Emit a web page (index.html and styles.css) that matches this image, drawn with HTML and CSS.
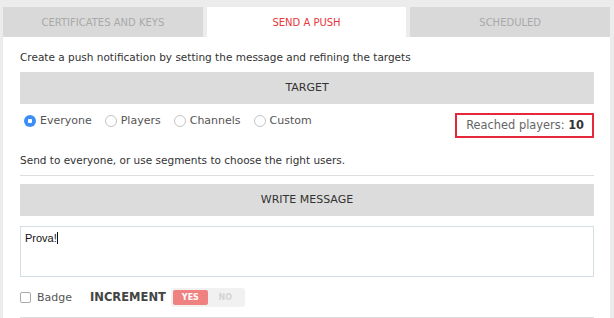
FILE: index.html
```html
<!DOCTYPE html>
<html lang="en">
<head>
    <meta charset="UTF-8">
    <title>Push</title>
    <link rel="stylesheet" href="styles.css">
</head>
<body>
    <div class="tabs">
        <div class="tab">CERTIFICATES AND KEYS</div>
        <div class="tab active">SEND A PUSH</div>
        <div class="tab">SCHEDULED</div>
    </div>

    <div class="panel">
        <p class="intro">Create a push notification by setting the message and refining the targets</p>

        <!-- Target -->
        <div class="bar">TARGET</div>
        <div class="target-row">
            <div class="radios">
                <label class="radio"><span class="dot checked"></span>Everyone</label>
                <label class="radio"><span class="dot"></span>Players</label>
                <label class="radio"><span class="dot"></span>Channels</label>
                <label class="radio"><span class="dot"></span>Custom</label>
            </div>
            <div class="reached">Reached players: <b>10</b></div>
        </div>
        <p class="hint">Send to everyone, or use segments to choose the right users.</p>
        <hr class="sep">

        <!-- Message -->
        <div class="bar">WRITE MESSAGE</div>
        <div class="message">Prova!<span class="caret"></span></div>
        <div class="badge-row">
            <label class="check"><span class="box"></span>Badge</label>
            <span class="increment">INCREMENT</span>
            <div class="toggle">
                <span class="yes">YES</span>
                <span class="no">NO</span>
            </div>
        </div>
        <div class="bar bottom"></div>
    </div>
</body>
</html>
```

FILE: styles.css
```css
body {
    margin: 0;
    background: #ececec;
    font-family: 'DejaVu Sans', Verdana, sans-serif;
    color: #333;
    height: 318px;
    overflow: hidden;
}

.tabs {
    display: flex;
    gap: 4px;
    padding: 7px 4px 0 3px;
}

.tab {
    flex: 1;
    height: 30px;
    box-sizing: border-box;
    padding-top: 1px;
    line-height: 30px;
    text-align: center;
    background: #d9d9d9;
    color: #a9a9a9;
    font-size: 10px;
}

.tab.active {
    background: white;
    color: #e8363d;
}

.panel {
    background: white;
    margin: 0 4px 0 3px;
    padding: 0 16px 0 17px;
    height: 281px;
    overflow: hidden;
}

.intro {
    margin: 0;
    padding: 13px 0 0;
    font-size: 10.5px;
    line-height: 15px;
    height: 22px;
}

.bar {
    background: #dcdcdc;
    height: 32px;
    line-height: 32px;
    text-align: center;
    font-size: 11px;
    color: #333;
}

.target-row {
    display: flex;
    justify-content: space-between;
    align-items: flex-start;
    padding-top: 9px;
}

.radios {
    display: flex;
    gap: 13px;
    padding-left: 4px;
    font-size: 11px;
    line-height: 16px;
    color: #555;
}

.radio {
    display: flex;
    align-items: center;
    gap: 4px;
}

.dot {
    width: 12px;
    height: 12px;
    border: 1px solid #c4c4c4;
    border-radius: 50%;
    box-sizing: border-box;
}

.dot.checked {
    border: none;
    background: radial-gradient(circle, white 0 2px, #3a8ef5 2.5px);
}

.reached {
    border: 2px solid #e6283a;
    height: 25px;
    box-sizing: border-box;
    line-height: 21px;
    padding: 0 8px 0 9px;
    font-size: 11.4px;
    color: #666;
}

.reached b {
    color: #333;
}

.hint {
    margin: 0;
    padding-top: 15px;
    font-size: 10.5px;
    line-height: 15px;
    height: 22px;
}

.sep {
    border: none;
    border-top: 1px solid #dedede;
    margin: 0 0 8px;
}

.message {
    margin-top: 10px;
    height: 51px;
    border: 1px solid #d4dfe4;
    box-sizing: border-box;
    padding: 5px 4px;
    font-family: 'Liberation Sans', Arial, sans-serif;
    font-size: 11px;
    color: #111;
}

.caret {
    display: inline-block;
    width: 1px;
    height: 12px;
    background: #111;
    vertical-align: -2px;
}

.badge-row {
    display: flex;
    align-items: center;
    height: 40px;
    font-size: 11px;
}

.check {
    display: flex;
    align-items: center;
    gap: 6px;
    color: #555;
}

.box {
    width: 9px;
    height: 9px;
    border: 1px solid #aaa;
    border-radius: 2px;
}

.increment {
    margin-left: 18px;
    font-weight: bold;
    font-size: 11.5px;
    color: #444;
}

.toggle {
    display: flex;
    margin-left: 5px;
    background: #f1f1f1;
    border-radius: 3px;
    padding: 2px;
    font-size: 8px;
    font-weight: bold;
}

.toggle span {
    width: 35px;
    height: 15px;
    line-height: 15px;
    text-align: center;
}

.yes {
    background: #f08181;
    color: white;
    border-radius: 2px;
}

.no {
    color: #d4d4d4;
}

.bottom {
    height: 10px;
}
```
